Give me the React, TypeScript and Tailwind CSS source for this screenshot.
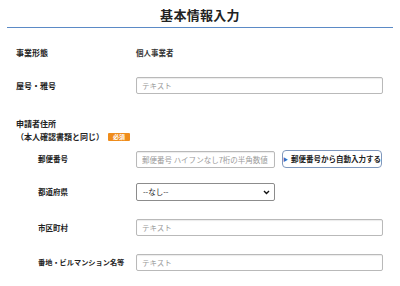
const font = { fontFamily: '"Noto Sans CJK JP", "Noto Sans", sans-serif' }

function TextInput({ placeholder = 'テキスト', wide = true }: { placeholder?: string; wide?: boolean }) {
  return (
    <input
      type="text"
      placeholder={placeholder}
      className={`${wide ? 'w-[247px]' : 'w-[139px]'} h-[17px] border border-[#b9b9b9] rounded-[2px] px-[5px] text-[7.5px] text-[#333] placeholder:text-[#9a9a9a] shadow-[inset_0_1px_1px_rgba(0,0,0,0.08)] outline-none`}
    />
  )
}

export default function App() {
  return (
    <div className="w-[400px] h-[286px] bg-white text-[#222] overflow-hidden" style={font}>
      {/* Header */}
      <div className="px-[7px]">
        <h1 className="h-[27px] flex items-center justify-center text-[13px] font-bold tracking-[0.3px] pt-[2px]">基本情報入力</h1>
        <div className="h-[1px] bg-[#5b8ac6]" />
      </div>

      <div className="pl-[16px] pr-[17px]">
        {/* 事業形態 */}
        <div className="flex items-center h-[17px] mt-[16px]">
          <div className="w-[120px] text-[8px] font-bold">事業形態</div>
          <div className="text-[7.5px] font-bold text-[#333]">個人事業者</div>
        </div>

        {/* 屋号・雅号 */}
        <div className="flex items-center mt-[16px]">
          <div className="w-[120px] text-[8px] font-bold">屋号・雅号</div>
          <TextInput />
        </div>

        {/* 申請者住所 */}
        <div className="mt-[23px] text-[8px] font-bold leading-[13px]">
          <div>申請者住所</div>
          <div className="flex items-center">
            <span>（本人確認書類と同じ）</span>
            <span className="ml-[4px] px-[5px] h-[8px] leading-[8px] rounded-[1px] bg-[#ef8c1b] text-white text-[6px] font-bold">必須</span>
          </div>
        </div>

        <div className="pl-[22px]">
          {/* 郵便番号 */}
          <div className="flex items-center mt-[7px]">
            <div className="w-[98px] text-[7.5px] font-bold">郵便番号</div>
            <TextInput placeholder="郵便番号 ハイフンなし7桁の半角数値" wide={false} />
            <button className="ml-[7px] w-[100px] h-[18px] border border-[#7f98bd] rounded-[4px] bg-white flex items-center justify-center gap-[3px] text-[7.5px] font-bold text-[#222]">
              <span className="text-[#3b6cc2] text-[5px]">▶</span>
              郵便番号から自動入力する
            </button>
          </div>

          {/* 都道府県 */}
          <div className="flex items-center mt-[15px]">
            <div className="w-[98px] text-[7.5px] font-bold">都道府県</div>
            <div className="relative w-[139px] h-[18px] border border-[#8c8c8c] rounded-[2px] flex items-center px-[6px] text-[7.5px] text-[#222]">
              --なし--
              <svg className="absolute right-[4px] top-[6px] w-[7px] h-[5px]" viewBox="0 0 7 5" fill="none" stroke="#111" strokeWidth={1.4}>
                <path d="M1 1l2.5 2.5L6 1" />
              </svg>
            </div>
          </div>

          {/* 市区町村 */}
          <div className="flex items-center mt-[18px]">
            <div className="w-[98px] text-[7.5px] font-bold">市区町村</div>
            <TextInput />
          </div>

          {/* 番地 */}
          <div className="flex items-center mt-[18px]">
            <div className="w-[98px] text-[7.2px] font-bold whitespace-nowrap">番地・ビルマンション名等</div>
            <TextInput />
          </div>
        </div>
      </div>
    </div>
  )
}
